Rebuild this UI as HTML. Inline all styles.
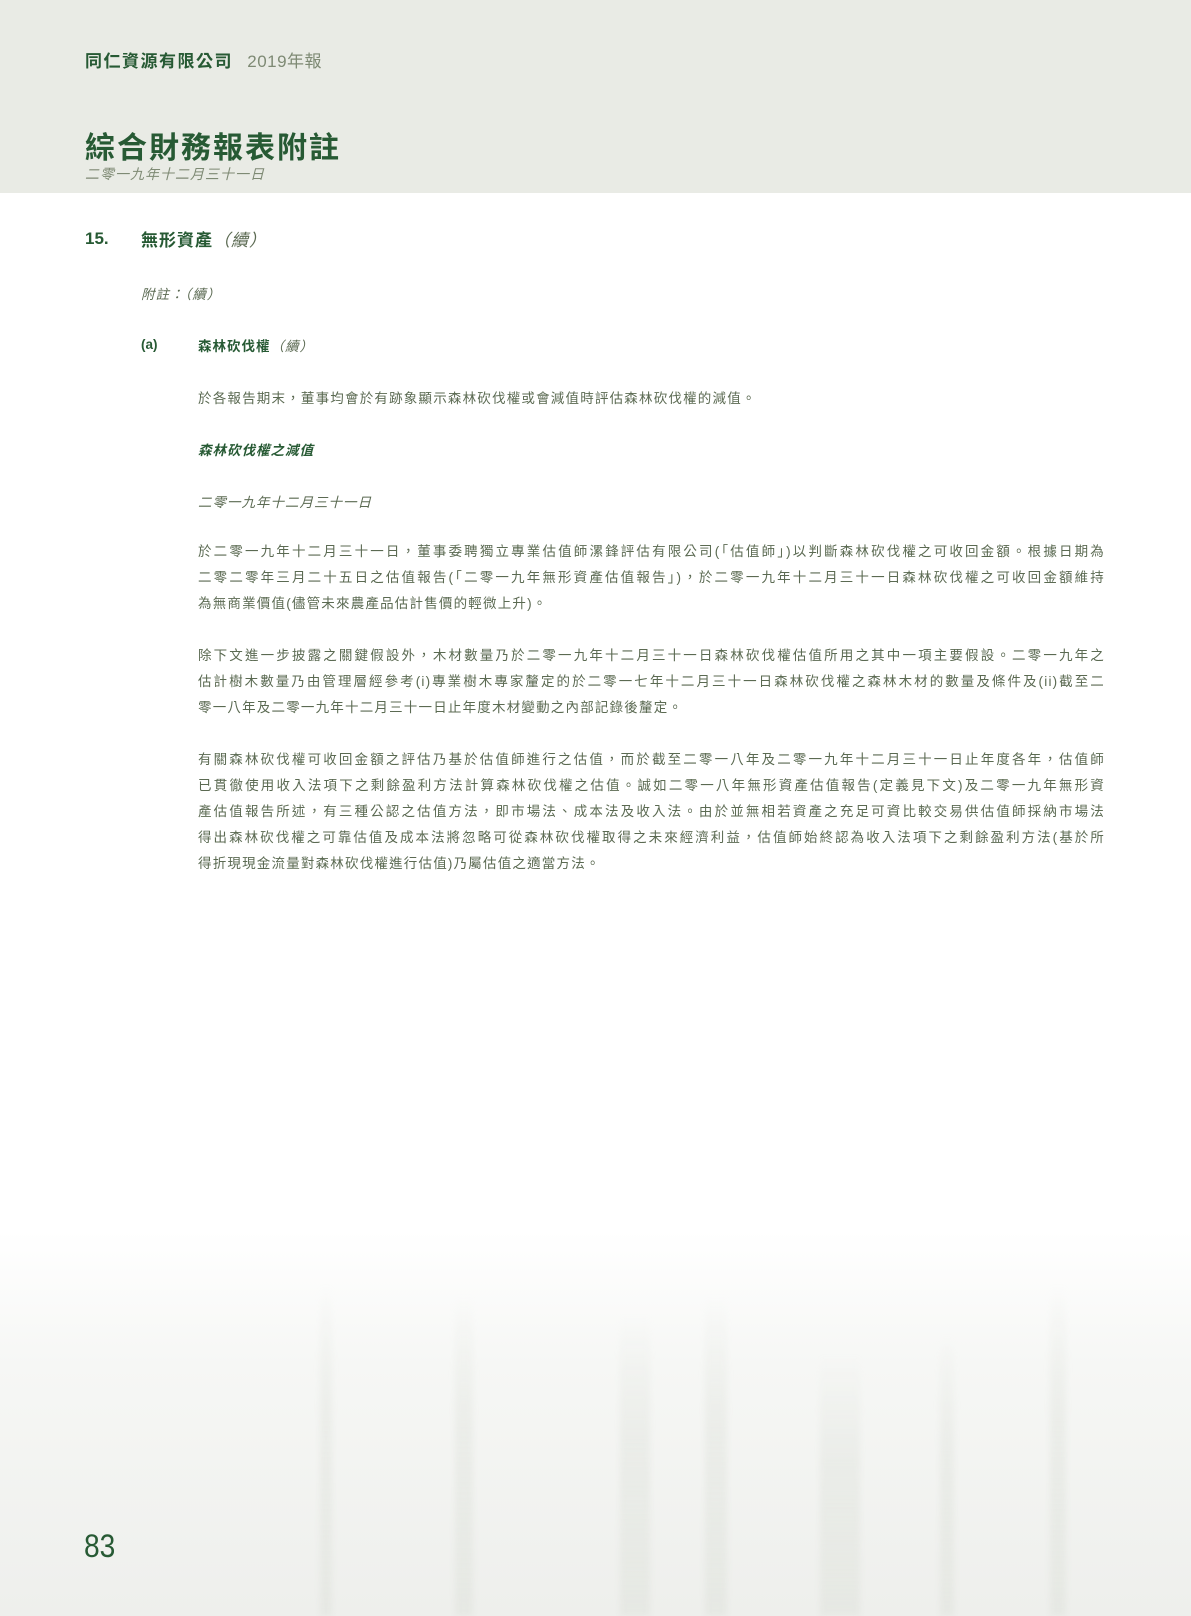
<!DOCTYPE html>
<html><head><meta charset="utf-8"><style>
*{margin:0;padding:0;box-sizing:border-box}
body{width:1191px;height:1616px;position:relative;overflow:hidden;background:#fff;font-family:"Liberation Sans","Noto Sans CJK TC",sans-serif;color:#5b6a52}
.hdr{position:absolute;left:0;top:0;width:1191px;height:193px;background:#e9ebe5}
.abs{position:absolute;white-space:nowrap}
.g{color:#275a34}
.bg{position:absolute;left:0;top:1230px;width:1191px;height:386px;background:linear-gradient(#fff 0%,#f6f7f5 35%,#eeefec 100%)}
.tr{position:absolute;bottom:0;background:linear-gradient(rgba(225,228,222,0),rgba(225,228,222,.45) 40%,rgba(225,228,222,.6));filter:blur(3px)}
.p{position:absolute;left:198px;width:907px;font-size:13.5px;letter-spacing:1.2px}
.p div{height:26px;line-height:26px;text-align:justify;text-align-last:justify;white-space:nowrap}
.p div.l{text-align-last:left}
</style></head><body>
<div class="hdr"></div>
<div class="bg"></div>
<div class="tr" style="left:320px;width:12px;height:330px"></div>
<div class="tr" style="left:455px;width:18px;height:320px"></div>
<div class="tr" style="left:620px;width:30px;height:300px"></div>
<div class="tr" style="left:705px;width:22px;height:320px"></div>
<div class="tr" style="left:820px;width:40px;height:260px"></div>
<div class="tr" style="left:940px;width:14px;height:280px"></div>
<div class="tr" style="left:1050px;width:16px;height:330px"></div>

<div class="abs g" style="left:85px;top:47px;font-size:17px;font-weight:bold;letter-spacing:1.5px">同仁資源有限公司 <span style="font-weight:normal;color:#7e8a74;margin-left:8px;letter-spacing:0.5px">2019年報</span></div>
<div class="abs g" style="left:85px;top:123px;font-size:30px;font-weight:bold;letter-spacing:2px">綜合財務報表附註</div>
<div class="abs" style="left:85px;top:164px;font-size:14px;font-style:italic;color:#7e8a74;letter-spacing:1px;line-height:20px">二零一九年十二月三十一日</div>

<div class="abs g" style="left:85px;top:229px;font-size:17px;font-weight:bold">15.</div>
<div class="abs g" style="left:141px;top:226px;font-size:17px;font-weight:bold;letter-spacing:1px">無形資產<span style="font-weight:normal;font-style:italic;color:#5b6a52">（續）</span></div>
<div class="abs" style="left:141px;top:283px;font-size:13.5px;font-style:italic;letter-spacing:1px">附註：（續）</div>
<div class="abs g" style="left:141px;top:337px;font-size:13.5px;font-weight:bold">(a)</div>
<div class="abs g" style="left:198px;top:335px;font-size:13.5px;font-weight:bold;letter-spacing:1px">森林砍伐權<span style="font-weight:normal;font-style:italic;color:#5b6a52">（續）</span></div>
<div class="abs" style="left:198px;top:387px;font-size:13.5px;letter-spacing:1.2px">於各報告期末，董事均會於有跡象顯示森林砍伐權或會減值時評估森林砍伐權的減值。</div>
<div class="abs g" style="left:198px;top:439px;font-size:13.5px;font-weight:bold;font-style:italic;letter-spacing:1px">森林砍伐權之減值</div>
<div class="abs" style="left:198px;top:491px;font-size:13.5px;font-style:italic;letter-spacing:1px">二零一九年十二月三十一日</div>

<div class="p" style="top:539px">
<div>於二零一九年十二月三十一日，董事委聘獨立專業估值師漯鋒評估有限公司(「估值師」)以判斷森林砍伐權之可收回金額。根據日期為</div>
<div>二零二零年三月二十五日之估值報告(「二零一九年無形資產估值報告」)，於二零一九年十二月三十一日森林砍伐權之可收回金額維持</div>
<div class="l">為無商業價值(儘管未來農產品估計售價的輕微上升)。</div>
</div>
<div class="p" style="top:643px">
<div>除下文進一步披露之關鍵假設外，木材數量乃於二零一九年十二月三十一日森林砍伐權估值所用之其中一項主要假設。二零一九年之</div>
<div>估計樹木數量乃由管理層經參考(i)專業樹木專家釐定的於二零一七年十二月三十一日森林砍伐權之森林木材的數量及條件及(ii)截至二</div>
<div class="l">零一八年及二零一九年十二月三十一日止年度木材變動之內部記錄後釐定。</div>
</div>
<div class="p" style="top:747px">
<div>有關森林砍伐權可收回金額之評估乃基於估值師進行之估值，而於截至二零一八年及二零一九年十二月三十一日止年度各年，估值師</div>
<div>已貫徹使用收入法項下之剩餘盈利方法計算森林砍伐權之估值。誠如二零一八年無形資產估值報告(定義見下文)及二零一九年無形資</div>
<div>產估值報告所述，有三種公認之估值方法，即市場法、成本法及收入法。由於並無相若資產之充足可資比較交易供估值師採納市場法</div>
<div>得出森林砍伐權之可靠估值及成本法將忽略可從森林砍伐權取得之未來經濟利益，估值師始終認為收入法項下之剩餘盈利方法(基於所</div>
<div class="l">得折現現金流量對森林砍伐權進行估值)乃屬估值之適當方法。</div>
</div>

<div class="abs g" style="left:84px;top:1528px;font-size:32px;transform:scaleX(.88);transform-origin:left">83</div>
</body></html>
